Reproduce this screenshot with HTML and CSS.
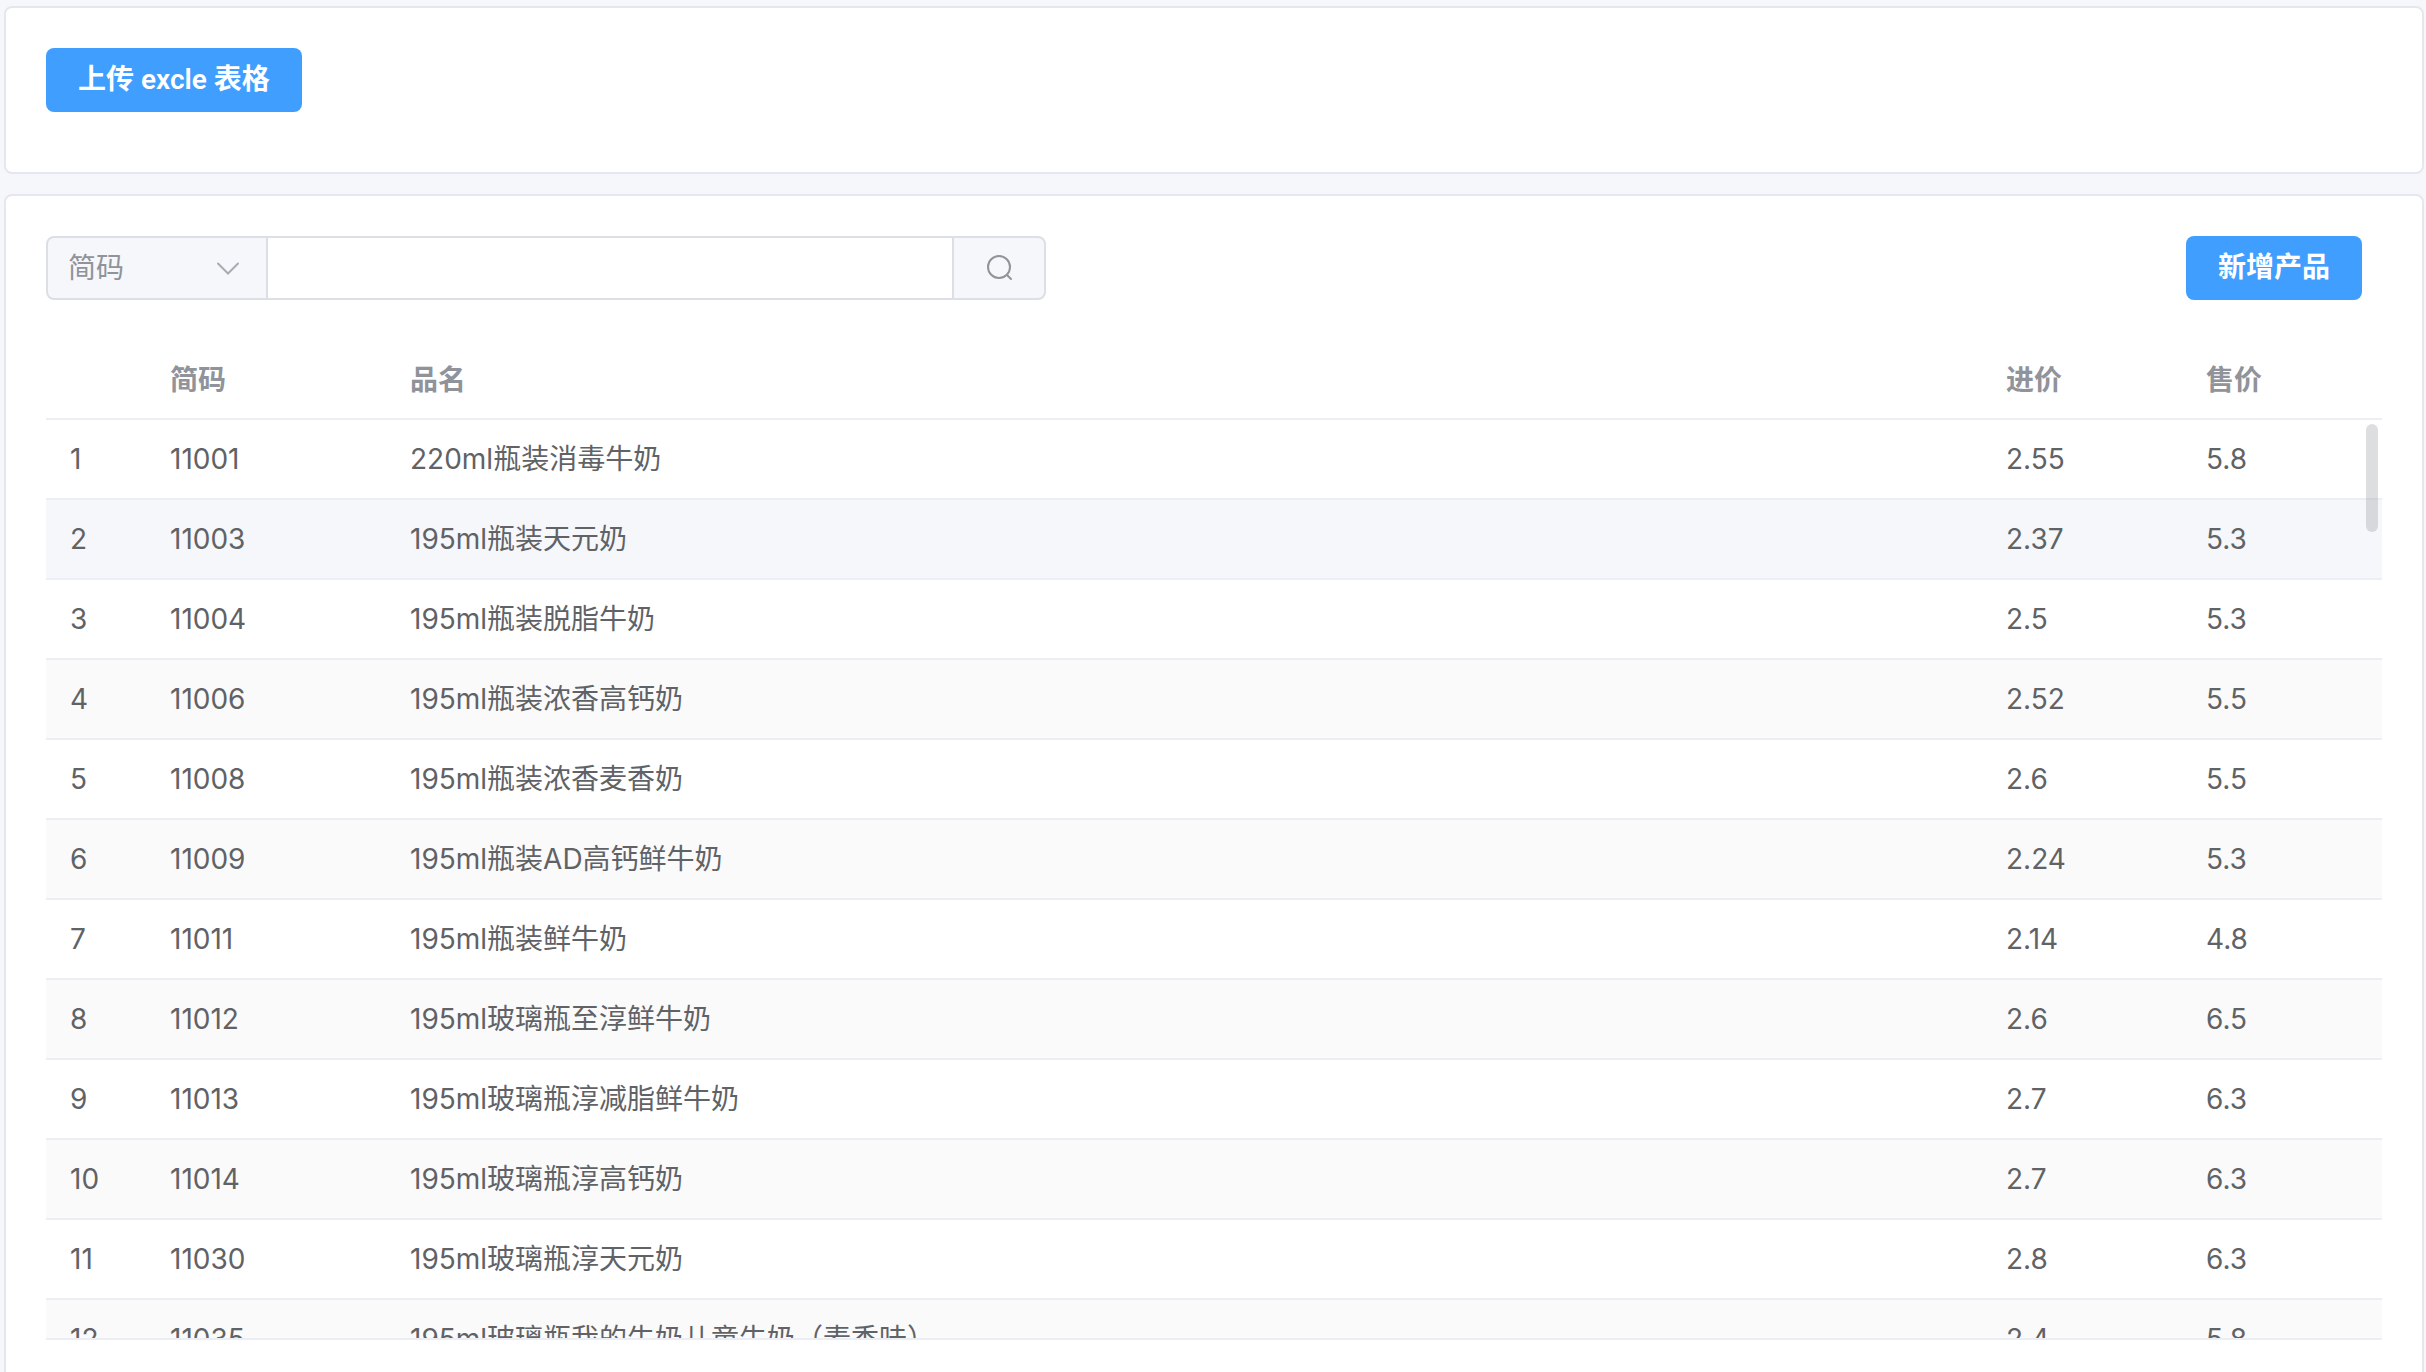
FILE: index.html
```html
<!DOCTYPE html>
<html lang="zh-CN">
<head>
<meta charset="utf-8">
<title>产品管理</title>
<link rel="stylesheet" href="styles.css">
</head>
<body>
<main class="page">
  <section class="card card-upload">
    <button class="btn" type="button">上传 excle 表格</button>
  </section>

  <section class="card card-products">
    <div class="toolbar">
      <form class="search">
        <div class="search-field">
          <select class="search-select" aria-label="搜索字段">
            <option>简码</option>
          </select>
          <svg class="search-arrow" viewBox="0 0 22 14" aria-hidden="true"><path d="M1 1.5 11 11.5 21 1.5"/></svg>
        </div>
        <input class="search-input" type="text" aria-label="搜索内容">
        <button class="search-btn" type="button" aria-label="搜索">
          <svg class="search-icon" viewBox="0 0 28 28" aria-hidden="true"><circle cx="14" cy="13" r="11"/><path d="M22 21 26 25"/></svg>
        </button>
      </form>
      <button class="btn" type="button">新增产品</button>
    </div>

    <div class="table-wrap">
      <div class="table-scroll">
        <table class="table">
          <colgroup>
            <col class="col-index"><col class="col-code"><col><col class="col-price"><col class="col-price">
          </colgroup>
          <thead>
            <tr><th></th><th>简码</th><th>品名</th><th>进价</th><th>售价</th></tr>
          </thead>
          <tbody>
            <tr><td>1</td><td>11001</td><td>220ml瓶装消毒牛奶</td><td>2.55</td><td>5.8</td></tr>
            <tr class="is-hover"><td>2</td><td>11003</td><td>195ml瓶装天元奶</td><td>2.37</td><td>5.3</td></tr>
            <tr><td>3</td><td>11004</td><td>195ml瓶装脱脂牛奶</td><td>2.5</td><td>5.3</td></tr>
            <tr><td>4</td><td>11006</td><td>195ml瓶装浓香高钙奶</td><td>2.52</td><td>5.5</td></tr>
            <tr><td>5</td><td>11008</td><td>195ml瓶装浓香麦香奶</td><td>2.6</td><td>5.5</td></tr>
            <tr><td>6</td><td>11009</td><td>195ml瓶装AD高钙鲜牛奶</td><td>2.24</td><td>5.3</td></tr>
            <tr><td>7</td><td>11011</td><td>195ml瓶装鲜牛奶</td><td>2.14</td><td>4.8</td></tr>
            <tr><td>8</td><td>11012</td><td>195ml玻璃瓶至淳鲜牛奶</td><td>2.6</td><td>6.5</td></tr>
            <tr><td>9</td><td>11013</td><td>195ml玻璃瓶淳减脂鲜牛奶</td><td>2.7</td><td>6.3</td></tr>
            <tr><td>10</td><td>11014</td><td>195ml玻璃瓶淳高钙奶</td><td>2.7</td><td>6.3</td></tr>
            <tr><td>11</td><td>11030</td><td>195ml玻璃瓶淳天元奶</td><td>2.8</td><td>6.3</td></tr>
            <tr><td>12</td><td>11035</td><td>195ml玻璃瓶我的牛奶儿童牛奶（麦香味）</td><td>2.4</td><td>5.8</td></tr>
          </tbody>
        </table>
      </div>
      <div class="scroll-thumb"></div>
    </div>
  </section>
</main>
</body>
</html>
```
FILE: styles.css
```css
* {
  box-sizing: border-box;
}

body {
  height: 100vh;
  margin: 0;
  overflow: hidden;
  background: #f5f7fa;
  color: #606266;
  font-family: Inter, "Noto Sans CJK SC", sans-serif;
  font-size: 28px;
  line-height: 40px;
}

button,
input,
select {
  margin: 0;
  font: inherit;
}

.page {
  display: flex;
  flex-direction: column;
  gap: 20px;
  padding: 6px 2px 6px 4px;
}

.card {
  padding: 40px;
  border: 2px solid #e4e7ed;
  border-radius: 8px;
  background: #fff;
}

.card-upload {
  padding-bottom: 60px;
}

.btn {
  display: block;
  height: 64px;
  padding: 0 32px;
  border: 0;
  border-radius: 8px;
  background: #409eff;
  color: #fff;
  font-family: Roboto, "Noto Sans CJK SC", sans-serif;
  font-weight: 600;
}

.toolbar {
  display: flex;
  justify-content: space-between;
  margin-bottom: 40px;
  padding-right: 20px;
}

.search {
  display: flex;
  width: 1000px;
  height: 64px;
  overflow: hidden;
  border: 2px solid #dcdfe6;
  border-radius: 8px;
  background: #f5f7fa;
}

.search-field {
  position: relative;
  width: 218px;
}

.search-select {
  width: 100%;
  height: 100%;
  padding: 0 20px;
  border: 0;
  appearance: none;
  background: transparent;
  color: #909399;
}

.search-arrow {
  position: absolute;
  top: 24px;
  right: 27px;
  width: 22px;
  height: 14px;
  fill: none;
  stroke: #a8abb2;
  stroke-width: 2;
  stroke-linecap: round;
}

.search-input {
  flex: 1;
  min-width: 0;
  padding: 0 20px;
  border: 0;
  border-right: 2px solid #dcdfe6;
  border-left: 2px solid #dcdfe6;
  background: #fff;
  color: #606266;
}

.search-btn {
  display: flex;
  align-items: center;
  justify-content: center;
  width: 90px;
  padding: 0;
  border: 0;
  background: transparent;
}

.search-icon {
  width: 28px;
  height: 28px;
  fill: none;
  stroke: #909399;
  stroke-width: 2;
  stroke-linecap: round;
}

.table-wrap {
  position: relative;
  border-bottom: 2px solid #ebeef5;
}

.table-scroll {
  max-height: 998px;
  overflow: auto;
  scrollbar-width: none;
}

.table {
  width: 100%;
  table-layout: fixed;
  border-collapse: separate;
  border-spacing: 0;
}

.col-index {
  width: 100px;
}

.col-code {
  width: 240px;
}

.col-price {
  width: 200px;
}

.table th,
.table td {
  height: 80px;
  padding: 0 24px;
  border-bottom: 2px solid #ebeef5;
  text-align: left;
  white-space: nowrap;
}

.table th {
  position: sticky;
  top: 0;
  padding-top: 2px;
  background: #fff;
  color: #909399;
  font-weight: 700;
}

.table tbody tr:nth-child(even) {
  background: #fafafa;
}

.table tbody tr.is-hover {
  background: #f5f7fa;
}

.scroll-thumb {
  position: absolute;
  top: 84px;
  right: 4px;
  width: 12px;
  height: 108px;
  border-radius: 6px;
  background: rgba(144, 147, 153, 0.3);
}
```
